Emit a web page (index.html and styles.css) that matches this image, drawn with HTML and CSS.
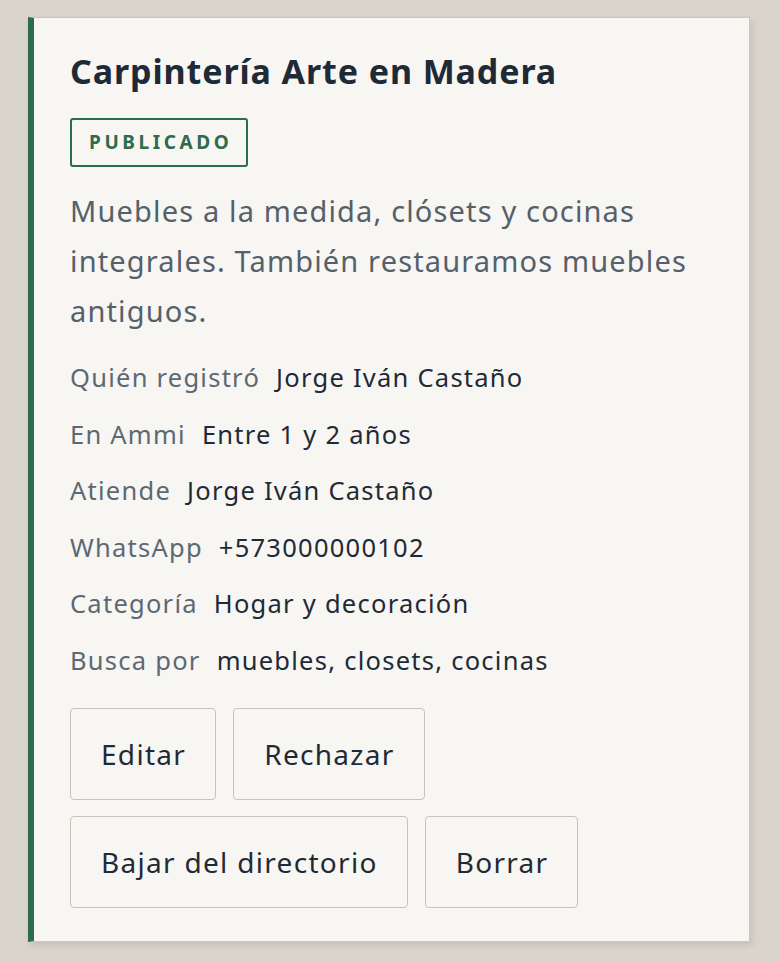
FILE: index.html
```html
<!DOCTYPE html>
<html lang="es">
<head>
<meta charset="utf-8">
<meta name="viewport" content="width=device-width, initial-scale=1">
<title>Carpintería Arte en Madera</title>
<link rel="stylesheet" href="styles.css">
</head>
<body>
<div class="card">
  <h2 class="card-title">Carpintería Arte en Madera</h2>
  <span class="badge">PUBLICADO</span>
  <p class="desc">Muebles a la medida, clósets y cocinas integrales. También restauramos muebles antiguos.</p>
  <div class="info">
    <div class="row"><span class="label">Quién registró</span><span class="value">Jorge Iván Castaño</span></div>
    <div class="row"><span class="label">En Ammi</span><span class="value">Entre 1 y 2 años</span></div>
    <div class="row"><span class="label">Atiende</span><span class="value">Jorge Iván Castaño</span></div>
    <div class="row"><span class="label">WhatsApp</span><span class="value">+573000000102</span></div>
    <div class="row"><span class="label">Categoría</span><span class="value">Hogar y decoración</span></div>
    <div class="row"><span class="label">Busca por</span><span class="value">muebles, closets, cocinas</span></div>
  </div>
  <div class="actions">
    <button type="button">Editar</button>
    <button type="button">Rechazar</button>
    <button type="button">Bajar del directorio</button>
    <button type="button">Borrar</button>
  </div>
</div>
</body>
</html>
```
FILE: styles.css
```css
body {
  margin: 0;
  padding: 17px 30px 20px 28px;
  background-color: #d9d5cb;
  font-family: "Noto Sans", sans-serif;
  color: #1f2a37;
}
.card {
  display: flex;
  flex-direction: column;
  align-items: flex-start;
  background-color: #f7f6f2;
  border: 1px solid #cbc8bd;
  border-left: 6px solid #2e6a4e;
  padding: 31px 36px 33px 36px;
  box-shadow: 2px 3px 6px rgba(60, 50, 30, 0.12);
}
.card-title {
  margin: 0;
  font-size: 34px;
  line-height: 44px;
  font-weight: 700;
  letter-spacing: 0.9px;
  color: #1f2a37;
}
.badge {
  margin-top: 25px;
  padding: 12px 13px 12px 17px;
  border: 2px solid #2e6a4e;
  border-radius: 3px;
  color: #2e6a4e;
  font-size: 19px;
  line-height: 21px;
  font-weight: 700;
  letter-spacing: 3.6px;
}
.desc {
  margin: 19px 0 0 0;
  font-size: 29px;
  line-height: 50px;
  letter-spacing: 1.15px;
  color: #55606a;
}
.info {
  margin-top: 13px;
}
.row {
  display: flex;
  gap: 16px;
  font-size: 25.5px;
  line-height: 56.6px;
  letter-spacing: 1.25px;
}
.label {
  color: #5d6872;
}
.value {
  color: #1f2a37;
}
.actions {
  display: flex;
  flex-wrap: wrap;
  gap: 16px 17px;
  margin-top: 19px;
}
.actions button {
  background: transparent;
  border: 1.5px solid #c6c3b8;
  border-radius: 4px;
  padding: 30px 29px 30px 30px;
  font-family: "Noto Sans", sans-serif;
  font-size: 28px;
  line-height: 30px;
  letter-spacing: 1.3px;
  color: #1f2a37;
  cursor: pointer;
}
```
